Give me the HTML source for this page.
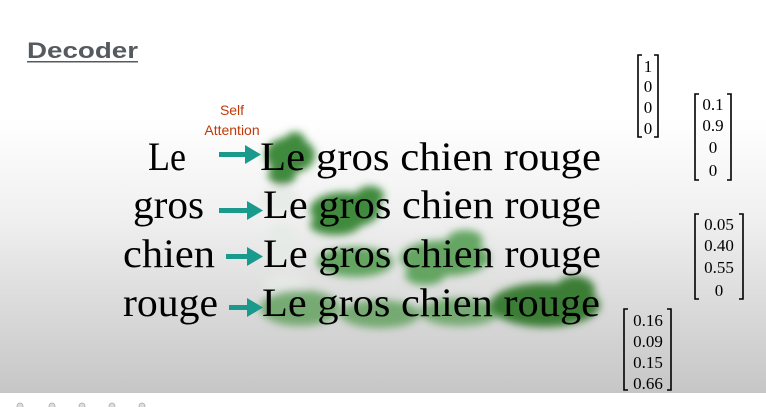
<!DOCTYPE html>
<html><head><meta charset="utf-8"><style>
html,body{margin:0;padding:0;width:766px;height:407px;overflow:hidden;background:#fff}
svg{display:block}
</style></head><body>
<svg width="766" height="407" viewBox="0 0 766 407" xmlns="http://www.w3.org/2000/svg">
<defs>
<linearGradient id="bg" x1="0" y1="0" x2="0" y2="1">
<stop offset="0" stop-color="#ffffff"/>
<stop offset="0.3" stop-color="#ffffff"/>
<stop offset="0.55" stop-color="#f0f0f0"/>
<stop offset="1" stop-color="#c6c6c6"/>
</linearGradient>
<filter id="b" x="-50%" y="-50%" width="200%" height="200%"><feGaussianBlur stdDeviation="4"/></filter>
</defs>
<rect x="0" y="0" width="766" height="393" fill="url(#bg)"/>
<rect x="0" y="393" width="766" height="14" fill="#fff"/>
<g fill="#ddd" stroke="#aaa" stroke-width="0.8">
<circle cx="20" cy="406" r="3"/><circle cx="52" cy="406" r="3"/><circle cx="82" cy="406" r="3"/><circle cx="112" cy="406" r="3"/><circle cx="142" cy="406" r="3"/>
</g>

<text x="27" y="58" font-family="Liberation Sans, sans-serif" font-size="22" font-weight="bold" fill="#555a60" textLength="111" lengthAdjust="spacingAndGlyphs">Decoder</text>
<rect x="27" y="61" width="111" height="1.5" fill="#555a60"/>

<text x="232" y="115" text-anchor="middle" font-family="Liberation Sans, sans-serif" font-size="14" fill="#c0390b">Self</text>
<text x="232" y="135" text-anchor="middle" font-family="Liberation Sans, sans-serif" font-size="14" fill="#c0390b">Attention</text>

<g filter="url(#b)">
<g fill="#e6ece6" opacity="0.8">
<ellipse cx="280" cy="200" rx="20" ry="14"/>
<ellipse cx="282" cy="245" rx="18" ry="22"/>
<ellipse cx="285" cy="285" rx="20" ry="12"/>
</g>
<g fill="#3f8a3c">
<ellipse cx="290" cy="155" rx="25" ry="18"/>
<ellipse cx="282" cy="175" rx="14" ry="10"/>
<ellipse cx="295" cy="140" rx="10" ry="8"/>
</g>
<g fill="#3f8a3c">
<ellipse cx="345" cy="210" rx="35" ry="18"/>
<ellipse cx="335" cy="225" rx="25" ry="10"/>
<ellipse cx="370" cy="196" rx="14" ry="10"/>
</g>
<g fill="#4e9a4a" opacity="0.85">
<ellipse cx="355" cy="262" rx="38" ry="15"/>
<ellipse cx="445" cy="258" rx="45" ry="18"/>
<ellipse cx="465" cy="240" rx="18" ry="10"/>
<ellipse cx="425" cy="275" rx="20" ry="10"/>
</g>
<g fill="#5d9f58" opacity="0.8">
<ellipse cx="300" cy="308" rx="40" ry="18"/>
<ellipse cx="380" cy="314" rx="40" ry="14"/>
<ellipse cx="460" cy="312" rx="40" ry="14"/>
</g>
<g fill="#3a7d36">
<ellipse cx="545" cy="305" rx="55" ry="22"/>
<ellipse cx="575" cy="290" rx="20" ry="14"/>
</g>
</g>

<g font-family="Liberation Serif, serif" font-size="40" fill="#000">
<text x="186" y="170" text-anchor="end" textLength="38" lengthAdjust="spacingAndGlyphs">Le</text>
<text x="204" y="218" text-anchor="end" textLength="71" lengthAdjust="spacingAndGlyphs">gros</text>
<text x="215" y="267" text-anchor="end" textLength="92" lengthAdjust="spacingAndGlyphs">chien</text>
<text x="218" y="316" text-anchor="end" textLength="95" lengthAdjust="spacingAndGlyphs">rouge</text>
<text x="260" y="170" textLength="341" lengthAdjust="spacingAndGlyphs">Le gros chien rouge</text>
<text x="263" y="218" textLength="338" lengthAdjust="spacingAndGlyphs">Le gros chien rouge</text>
<text x="263" y="267" textLength="338" lengthAdjust="spacingAndGlyphs">Le gros chien rouge</text>
<text x="262" y="316" textLength="338" lengthAdjust="spacingAndGlyphs">Le gros chien rouge</text>
</g>

<g fill="#1a9a8c">
<rect x="219" y="152" width="28" height="5"/><polygon points="245,145 261,154.5 245,164"/>
<rect x="219" y="208" width="30" height="5"/><polygon points="247,201 263,210.5 247,220"/>
<rect x="226" y="254" width="23" height="5"/><polygon points="247,247 263,256.5 247,266"/>
<rect x="229" y="305" width="20" height="5"/><polygon points="247,298 263,307.5 247,317"/>
</g>

<g font-family="Liberation Serif, serif" font-size="17" fill="#000" text-anchor="middle">
<text x="648" y="72">1</text><text x="648" y="92">0</text><text x="648" y="113">0</text><text x="648" y="134">0</text>
<text x="713" y="110">0.1</text><text x="713" y="131">0.9</text><text x="713" y="153">0</text><text x="713" y="176">0</text>
<text x="719" y="230">0.05</text><text x="719" y="251">0.40</text><text x="719" y="273">0.55</text><text x="719" y="296">0</text>
<text x="648" y="326">0.16</text><text x="648" y="347">0.09</text><text x="648" y="368">0.15</text><text x="648" y="389">0.66</text>
</g>
<g fill="none" stroke="#000" stroke-width="1.6">
<path d="M642,55 H638 V137 H642 M654,55 H658 V137 H654"/>
<path d="M699,94 H695 V180 H699 M727,94 H731 V180 H727"/>
<path d="M699,214 H695 V299 H699 M739,214 H743 V299 H739"/>
<path d="M628,309 H624 V390 H628 M667,309 H671 V390 H667"/>
</g>
</svg>
</body></html>
